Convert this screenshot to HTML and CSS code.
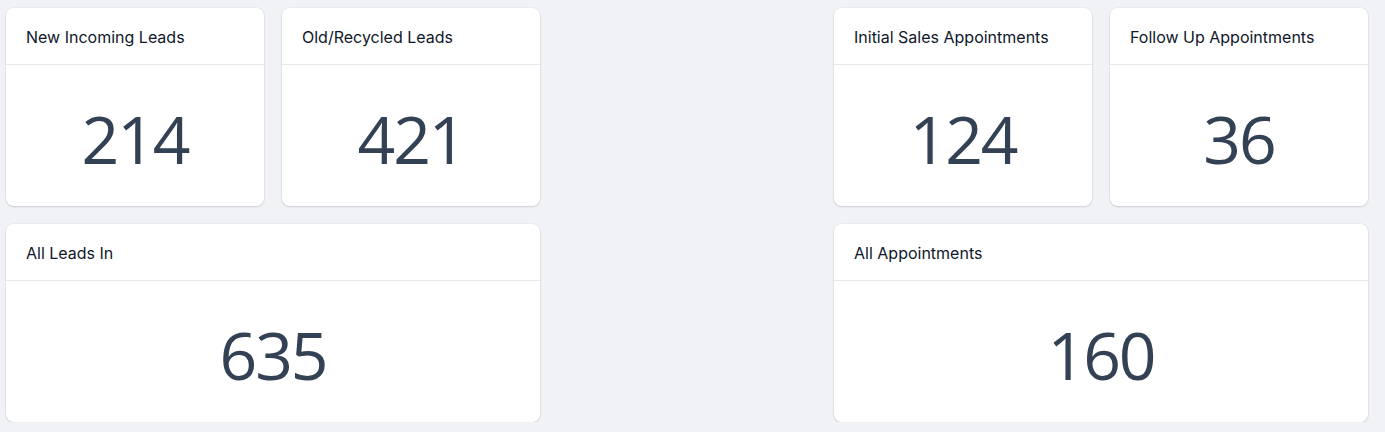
FILE: index.html
```html
<!DOCTYPE html>
<html lang="en">
<head>
<meta charset="utf-8">
<title>Dashboard</title>
<link rel="stylesheet" href="styles.css">
</head>
<body>
<main class="grid">
  <section class="card c1 r1"><header class="card-head">New Incoming Leads</header><div class="card-body"><span class="num">214</span></div></section>
  <section class="card c2 r1"><header class="card-head">Old/Recycled Leads</header><div class="card-body"><span class="num">421</span></div></section>
  <section class="card c4 r1"><header class="card-head">Initial Sales Appointments</header><div class="card-body"><span class="num">124</span></div></section>
  <section class="card c5 r1"><header class="card-head">Follow Up Appointments</header><div class="card-body"><span class="num">36</span></div></section>
  <section class="card wide-left r2"><header class="card-head">All Leads In</header><div class="card-body"><span class="num">635</span></div></section>
  <section class="card wide-right r2"><header class="card-head">All Appointments</header><div class="card-body"><span class="num">160</span></div></section>
</main>
</body>
</html>
```
FILE: styles.css
```css
html, body {
  margin: 0;
  padding: 0;
  background: #f1f2f6;
}
body {
  font-family: Inter, "Noto Sans", sans-serif;
}
.grid {
  display: grid;
  grid-template-columns: repeat(5, 258px);
  grid-template-rows: 198px 198px;
  gap: 18px;
  padding: 8px 17px 0 6px;
}
.card {
  background: #ffffff;
  border-radius: 8px;
  box-shadow: 0 1px 2px rgba(15, 23, 42, 0.14), 0 0 0 1px rgba(15, 23, 42, 0.03);
  display: flex;
  flex-direction: column;
  overflow: hidden;
}
.c1 { grid-column: 1; }
.c2 { grid-column: 2; }
.c4 { grid-column: 4; }
.c5 { grid-column: 5; }
.r1 { grid-row: 1; }
.r2 { grid-row: 2; }
.wide-left { grid-column: 1 / 3; }
.wide-right { grid-column: 4 / 6; }
.card-head {
  height: 57px;
  flex: none;
  box-sizing: border-box;
  border-bottom: 1px solid #e6e8ee;
  padding: 1px 20px 0;
  display: flex;
  align-items: center;
  font-size: 16px;
  font-weight: 400;
  color: #0f172a;
}
.card-body {
  flex: 1;
  display: flex;
  align-items: center;
  justify-content: center;
  padding-top: 4px;
}
.num {
  font-family: "Open Sans", sans-serif;
  font-size: 66px;
  letter-spacing: -2px;
  font-weight: 400;
  color: #334155;
  line-height: 1;
}
```
